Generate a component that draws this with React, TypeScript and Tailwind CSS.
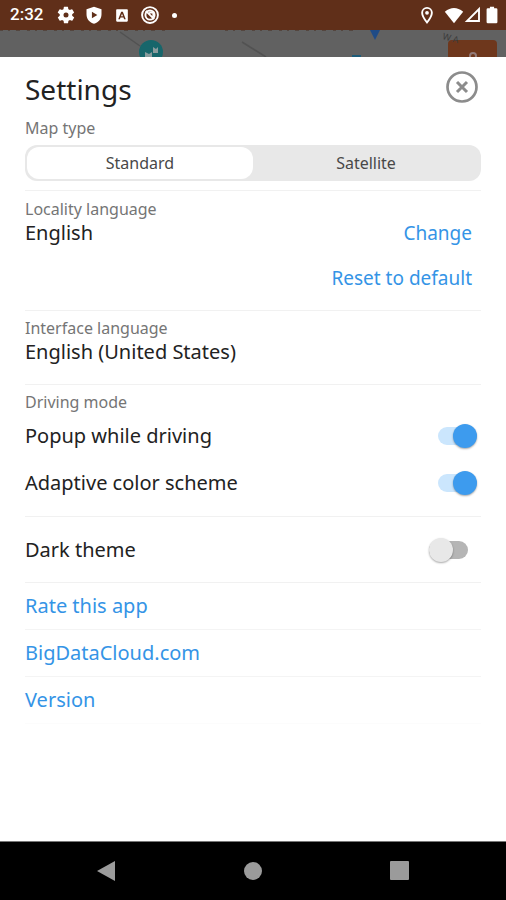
import React, { useState } from 'react';
import clsx from 'clsx';

function Icon({ className, children }: { className: string; children: React.ReactNode }) {
  return (
    <svg viewBox="0 0 24 24" className={className} aria-hidden="true">
      {children}
    </svg>
  );
}

function StatusBar() {
  return (
    <div className="flex h-[30px] items-center bg-[#602f19] pr-1 pl-[10px] text-white">
      <span className="w-[46px] font-[Roboto,sans-serif] text-[17px] font-medium">2:32</span>
      <div className="flex items-center gap-2">
        <Icon className="size-5">
          <path
            fill="currentColor"
            d="M19.4 13a7.800 7.800 0 0 0 0-2l2.100-1.600a.5.5 0 0 0 .1-.7l-2-3.400a.5.5 0 0 0-.6-.2l-2.500 1a7.300 7.300 0 0 0-1.700-1l-.4-2.600a.5.5 0 0 0-.5-.4h-4a.5.5 0 0 0-.5.4L9 5.100a7.300 7.300 0 0 0-1.700 1l-2.500-1a.5.5 0 0 0-.6.2l-2 3.400a.5.5 0 0 0 .1.7L4.500 11a7.800 7.800 0 0 0 0 2l-2.100 1.600a.5.5 0 0 0-.1.7l2 3.400c.1.2.4.3.6.2l2.500-1a7.300 7.300 0 0 0 1.700 1l.4 2.600c0 .2.2.4.5.4h4c.3 0 .5-.2.5-.4l.4-2.600a7.300 7.300 0 0 0 1.700-1l2.500 1c.2.1.5 0 .6-.2l2-3.400a.5.5 0 0 0-.1-.7zM12 15a3 3 0 1 1 0-6 3 3 0 0 1 0 6z"
          />
        </Icon>
        <Icon className="size-5">
          <path fill="currentColor" fillRule="evenodd" d="M12 2 3 5V11c0 6 4 10 9 11.500 5-1.500 9-5.500 9-11.500V5zM9.500 8l6.500 4-6.500 4z" />
        </Icon>
        <Icon className="size-5">
          <path fill="currentColor" fillRule="evenodd" d="M6 5h12q1 0 1 1v13q0 1-1 1H6q-1 0-1-1V6q0-1 1-1zm5 3-3.500 9h2l.7-2h3.600l.7 2h2L13 8zm1 2.500 1.200 3h-2.400z" />
        </Icon>
        <Icon className="size-5">
          <g fill="none" stroke="currentColor" strokeWidth="2.300">
            <circle cx="12" cy="12" r="9.500" />
            <circle cx="12" cy="12" r="5.500" />
            <path d="m7 7 10 10M11 9h5v5" />
          </g>
        </Icon>
        <span className="ml-1 size-[5px] rounded-full bg-white" />
      </div>
      <div className="ml-auto flex items-center">
        <Icon className="mr-2 size-[18px]">
          <path fill="none" stroke="currentColor" strokeWidth="2.500" d="M12 22C8 17 5.500 13 5.500 9a6.500 6.500 0 0 1 13 0c0 4-2.500 8-6.500 13z" />
          <circle cx="12" cy="9" r="2.500" fill="currentColor" />
        </Icon>
        <Icon className="size-5">
          <path fill="currentColor" d="M12 22 1 8q11-9 22 0z" />
        </Icon>
        <Icon className="size-[18px]">
          <path fill="none" stroke="currentColor" strokeWidth="2.500" d="M20 4v16H4z" />
        </Icon>
        <Icon className="size-5">
          <path fill="currentColor" d="M9.500 2h5v2H17q1.500 0 1.500 1.500v15Q18.500 22 17 22H7q-1.500 0-1.500-1.500v-15Q5.500 4 7 4h2.500z" />
        </Icon>
      </div>
    </div>
  );
}

function MapStrip() {
  return (
    <div className="h-[27px] overflow-hidden bg-[#616161]">
      <svg viewBox="0 0 506 27" preserveAspectRatio="xMidYMin slice" className="h-full w-full" aria-hidden="true">
        <path d="M120 2l20 14M242 12l24 15" stroke="#525252" strokeWidth="1.500" fill="none" />
        <path d="M0 0.500h165M225 0.500h130" stroke="#54463f" strokeDasharray="3 5 2 6 4 7" fill="none" />
        <circle cx="151" cy="22" r="12" fill="#17666b" />
        <path d="M145 22l4 2 3-2v5h-7zM153 17l3 2 2-2v6h-5z" fill="#8a9c9d" />
        <path d="M370 0h10l-5 10z" fill="#1f4b86" />
        <path d="M352 25h9v2h-9z" fill="#1d5b78" />
        <rect x="448" y="10" width="49" height="30" rx="4" fill="#6e371c" />
        <circle cx="473" cy="26" r="3" fill="none" stroke="#927a78" strokeWidth="2" />
        <text x="442" y="9" fontSize="9" fill="#3c3c3c" transform="rotate(15 442 9)">W A</text>
      </svg>
    </div>
  );
}

function Switch({ id, checked, onChange }: { id: string; checked: boolean; onChange: (v: boolean) => void }) {
  return (
    <span className={clsx('relative flex h-6 w-[39px] items-center', !checked && 'mr-[9px]')}>
      <input
        id={id}
        type="checkbox"
        role="switch"
        checked={checked}
        onChange={e => onChange(e.target.checked)}
        className={clsx('h-[18px] w-full cursor-pointer appearance-none rounded-full', checked ? 'bg-[#cbe6fd]' : 'bg-[#b5b5b5]')}
      />
      <span
        className={clsx(
          'pointer-events-none absolute size-6 rounded-full shadow-[0_1px_2px_rgba(0,0,0,0.35)]',
          checked ? 'right-0 bg-[#3d9bee]' : 'left-0 bg-[#e8e8e8]'
        )}
      />
    </span>
  );
}

function SwitchRow({ id, label, checked, onChange }: { id: string; label: string; checked: boolean; onChange: (v: boolean) => void }) {
  return (
    <div className="flex items-center justify-between pr-1 text-xl leading-6">
      <label htmlFor={id}>{label}</label>
      <Switch id={id} checked={checked} onChange={onChange} />
    </div>
  );
}

const mapTypes = ['Standard', 'Satellite'];
const links = ['Rate this app', 'BigDataCloud.com', 'Version'];

export default function App() {
  const [mapType, setMapType] = useState('Standard');
  const [popup, setPopup] = useState(true);
  const [adaptive, setAdaptive] = useState(true);
  const [dark, setDark] = useState(false);

  return (
    <div className="flex min-h-screen flex-col bg-white font-['Noto_Sans',sans-serif] text-[#222]">
      <StatusBar />
      <MapStrip />

      <main className="flex-1 px-[25px]">
        <header className="flex items-center justify-between pt-3 pr-[3px]">
          <h1 className="text-[28px] leading-10">Settings</h1>
          <button aria-label="Close" className="mb-1 text-[#8c8c8c]">
            <svg viewBox="0 0 32 32" className="size-8" fill="none" stroke="currentColor">
              <circle cx="16" cy="16" r="14.500" strokeWidth="2.700" />
              <path d="m11 11 10 10M21 11 11 21" strokeWidth="3" />
            </svg>
          </button>
        </header>

        {/* Map type */}
        <fieldset className="border-b border-[#f1f1f1] pb-[9px]">
          <legend className="pt-[7px] pb-[5px] text-base leading-6 text-[#757575]">Map type</legend>
          <div className="grid h-9 grid-cols-2 rounded-xl bg-[#e8e8e8] p-[2px]">
            {mapTypes.map(type => (
              <label
                key={type}
                className={clsx('flex cursor-pointer items-center justify-center rounded-xl text-base text-[#484848]', mapType === type && 'bg-white')}
              >
                <input type="radio" name="map-type" checked={mapType === type} onChange={() => setMapType(type)} className="sr-only" />
                {type}
              </label>
            ))}
          </div>
        </fieldset>

        {/* Locality language */}
        <section className="border-b border-[#f1f1f1] pt-[6px] pb-5">
          <h2 className="text-base leading-6 text-[#757575]">Locality language</h2>
          <div className="flex justify-between text-xl leading-6">
            <p>English</p>
            <button className="mr-[9px] text-[19px] text-[#3494e6]">Change</button>
          </div>
          <div className="mt-[21px] flex justify-end leading-6">
            <button className="mr-[9px] text-[19px] text-[#3494e6]">Reset to default</button>
          </div>
        </section>

        {/* Interface language */}
        <section className="border-b border-[#f1f1f1] pt-[5px] pb-5">
          <h2 className="text-base leading-6 text-[#757575]">Interface language</h2>
          <p className="text-xl leading-6">English (United States)</p>
        </section>

        {/* Driving mode */}
        <section className="border-b border-[#f1f1f1] pt-[5px] pb-[21px]">
          <h2 className="mb-[10px] text-base leading-6 text-[#757575]">Driving mode</h2>
          <div className="grid gap-[23px]">
            <SwitchRow id="popup" label="Popup while driving" checked={popup} onChange={setPopup} />
            <SwitchRow id="adaptive" label="Adaptive color scheme" checked={adaptive} onChange={setAdaptive} />
          </div>
        </section>

        <section className="border-b border-[#f1f1f1] pt-[21px] pb-5">
          <SwitchRow id="dark" label="Dark theme" checked={dark} onChange={setDark} />
        </section>

        <nav>
          {links.map(link => (
            <a key={link} href="#" className="block border-b border-[#f4f4f4] py-[11px] text-xl leading-6 text-[#3494e6] last:border-[#fcfcfc]">
              {link}
            </a>
          ))}
        </nav>
      </main>

      {/* Android navigation */}
      <footer className="flex h-[59px] items-center justify-center gap-[127px] border-t border-[#777] bg-black text-[#9b9b9b]">
        <button aria-label="Back">
          <svg viewBox="0 0 20 20" className="size-5" fill="currentColor"><path d="M19 0v20L1 10z" /></svg>
        </button>
        <button aria-label="Home">
          <svg viewBox="0 0 20 20" className="size-5" fill="currentColor"><circle cx="10" cy="10" r="9" /></svg>
        </button>
        <button aria-label="Recent apps">
          <svg viewBox="0 0 20 20" className="size-5" fill="currentColor"><rect width="19" height="19" rx="1" /></svg>
        </button>
      </footer>
    </div>
  );
}
